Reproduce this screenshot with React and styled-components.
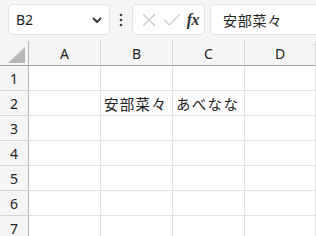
import React from 'react';
import styled, { createGlobalStyle } from 'styled-components';

const GlobalStyle = createGlobalStyle`
  html, body {
    margin: 0;
    padding: 0;
    background: #f5f5f5;
    overflow: hidden;
  }
  body {
    font-family: "Noto Sans", "Noto Sans CJK JP", sans-serif;
  }
`;

const Window = styled.div`
  width: 316px;
  height: 236px;
  overflow: hidden;
  background: #f5f5f5;
`;

const Toolbar = styled.div`
  height: 41px;
  display: flex;
  align-items: flex-start;
  padding: 4px 0 0 8px;
  box-sizing: border-box;
`;

const Box = styled.div`
  height: 31px;
  box-sizing: border-box;
  background: #fff;
  border: 1px solid #e3e3e3;
  border-radius: ${(p) => p.$radius || '5px'};
  display: flex;
  align-items: center;
`;

const NameBox = styled(Box)`
  width: 102px;
  padding: 0 6px 0 7px;
  justify-content: space-between;
  font-size: 14px;
  color: #222;
`;

const Dots = styled.div`
  width: 22px;
  height: 31px;
  display: flex;
  align-items: center;
  justify-content: center;
`;

const FxBox = styled(Box)`
  width: 73px;
  padding: 0 5px 0 8px;
  justify-content: space-between;
`;

const Fx = styled.span`
  font-family: "Liberation Serif", serif;
  font-style: italic;
  font-weight: bold;
  font-size: 16px;
  color: #333;
  letter-spacing: -0.5px;
`;

const FormulaInput = styled(Box)`
  flex: 1;
  margin-left: 5px;
  border-right: none;
  border-radius: 5px 0 0 5px;
  padding-left: 12px;
  font-family: "Noto Sans CJK JP", sans-serif;
  font-size: 14px;
  letter-spacing: 0.8px;
  color: #222;
`;

const Grid = styled.div`
  display: grid;
  grid-template-columns: 29px 72px 72px 72px 1fr;
  grid-auto-rows: 25px;
`;

const HeadCell = styled.div`
  box-sizing: border-box;
  background: #f5f5f5;
  border-bottom: 1px solid #9f9f9f;
  border-right: 1px solid ${(p) => (p.$corner ? '#b5b5b5' : '#d5d5d5')};
  display: flex;
  align-items: center;
  justify-content: center;
  font-size: 14px;
  color: #222;
  position: relative;
`;

const Corner = styled.div`
  position: absolute;
  right: 3px;
  bottom: 2px;
  width: 17px;
  height: 16px;
  background: #b9b9b9;
  clip-path: polygon(100% 0, 100% 100%, 0 100%);
`;

const RowHead = styled.div`
  box-sizing: border-box;
  background: #f5f5f5;
  border-right: 1px solid #b5b5b5;
  border-bottom: 1px solid #d5d5d5;
  display: flex;
  align-items: center;
  justify-content: center;
  font-size: 14px;
  color: #222;
`;

const Cell = styled.div`
  box-sizing: border-box;
  background: #fff;
  border-right: 1px solid #e1e1e1;
  border-bottom: 1px solid #e1e1e1;
  display: flex;
  align-items: center;
  padding-left: 3px;
  font-family: "Noto Sans CJK JP", sans-serif;
  font-size: 14.5px;
  letter-spacing: 1.3px;
  color: #222;
  white-space: nowrap;
`;

const Chevron = () => (
  <svg width="12" height="12" viewBox="0 0 12 12">
    <path d="M2.5 4.5 L6 8 L9.5 4.5" fill="none" stroke="#333" strokeWidth="1.8" strokeLinecap="round" strokeLinejoin="round" />
  </svg>
);

const VDots = () => (
  <svg width="4" height="14" viewBox="0 0 4 14">
    <circle cx="2" cy="2" r="1.3" fill="#444" />
    <circle cx="2" cy="7" r="1.3" fill="#444" />
    <circle cx="2" cy="12" r="1.3" fill="#444" />
  </svg>
);

const Cross = () => (
  <svg width="16" height="16" viewBox="0 0 16 16">
    <path d="M2 2 L14 14 M14 2 L2 14" stroke="#c8c8c8" strokeWidth="1.2" fill="none" />
  </svg>
);

const Check = () => (
  <svg width="18" height="16" viewBox="0 0 18 16">
    <path d="M1.5 8 L6.5 13 L16.5 2.5" stroke="#c8c8c8" strokeWidth="1.2" fill="none" />
  </svg>
);

const columns = ['A', 'B', 'C', 'D'];
const rows = [1, 2, 3, 4, 5, 6, 7];
const data = { '2B': '安部菜々', '2C': 'あべなな' };

export default function App() {
  return (
    <Window>
      <GlobalStyle />
      <Toolbar>
        <NameBox>
          <span>B2</span>
          <Chevron />
        </NameBox>
        <Dots>
          <VDots />
        </Dots>
        <FxBox>
          <Cross />
          <Check />
          <Fx>fx</Fx>
        </FxBox>
        <FormulaInput>安部菜々</FormulaInput>
      </Toolbar>
      <Grid>
        <HeadCell $corner>
          <Corner />
        </HeadCell>
        {columns.map((c) => (
          <HeadCell key={c}>{c}</HeadCell>
        ))}
        {rows.map((r) => (
          <React.Fragment key={r}>
            <RowHead>{r}</RowHead>
            {columns.map((c) => (
              <Cell key={c}>{data[r + c] || ''}</Cell>
            ))}
          </React.Fragment>
        ))}
      </Grid>
    </Window>
  );
}
